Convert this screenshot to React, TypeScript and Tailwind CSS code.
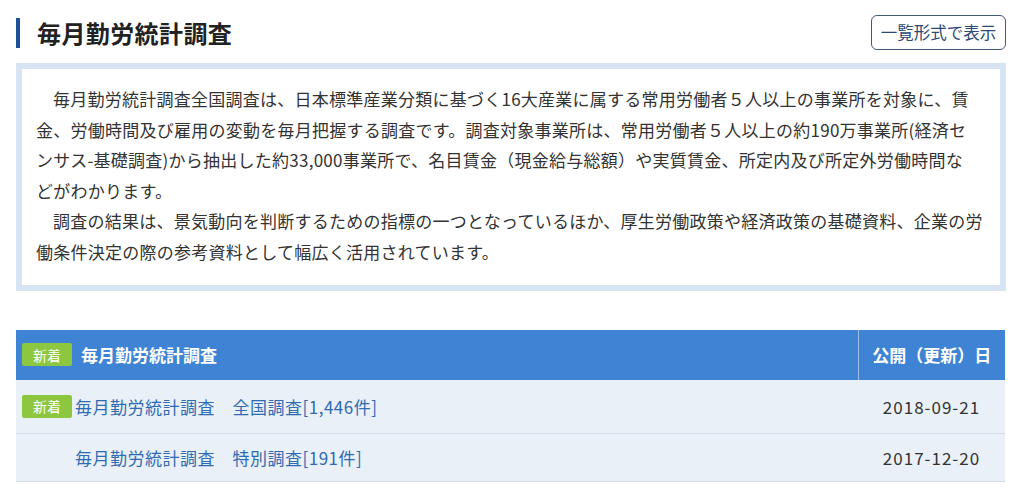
import React from 'react'

const font = { fontFamily: '"Noto Sans CJK JP", "Noto Sans", sans-serif' }

function Badge() {
  return (
    <span className="inline-flex items-center justify-center w-[50px] h-[23px] rounded-[2px] bg-[#8dc63f] text-white text-[14px] font-normal leading-none">
      新着
    </span>
  )
}

export default function App() {
  const rows = [
    { isNew: true, label: '毎月勤労統計調査　全国調査[1,446件]', date: '2018-09-21', h: 'h-[54px]' },
    { isNew: false, label: '毎月勤労統計調査　特別調査[191件]', date: '2017-12-20', h: 'h-[48px]' },
  ]

  return (
    <div className="w-[1024px] h-[494px] bg-white overflow-hidden text-[#333]" style={font}>
      <div className="ml-4 w-[990px] pt-[15px]">
        <div className="flex items-center justify-between h-[35px]">
          <h1 className="border-l-[4px] border-[#1d4f9c] pl-[17px] h-[30px] flex items-center text-[24px] font-bold text-[#222] leading-none tracking-[0.4px]">
            毎月勤労統計調査
          </h1>
          <button className="h-[35px] w-[135px] rounded-[6px] border border-[#41597d] text-[#2b4a77] text-[16.5px] leading-none bg-white">
            一覧形式で表示
          </button>
        </div>

        <div className="mt-[13px] border-[6px] border-[#d7e4f4] bg-white pl-[14px] pr-2 pt-[15px] pb-[17px] text-[17px] leading-[30.6px] tracking-[0.25px] text-[#333]">
          <p className="whitespace-nowrap indent-[1em]">
            毎月勤労統計調査全国調査は、日本標準産業分類に基づく16大産業に属する常用労働者５人以上の事業所を対象に、賃
            <br />
            金、労働時間及び雇用の変動を毎月把握する調査です。調査対象事業所は、常用労働者５人以上の約190万事業所(経済セ
            <br />
            ンサス-基礎調査)から抽出した約33,000事業所で、名目賃金（現金給与総額）や実質賃金、所定内及び所定外労働時間な
            <br />
            どがわかります。
          </p>
          <p className="whitespace-nowrap indent-[1em]">
            調査の結果は、景気動向を判断するための指標の一つとなっているほか、厚生労働政策や経済政策の基礎資料、企業の労
            <br />
            働条件決定の際の参考資料として幅広く活用されています。
          </p>
        </div>

        <table className="mt-[39px] w-[989px] border-collapse">
          <thead>
            <tr className="h-[50px] bg-[#3f84d4] text-white">
              <th className="text-left pl-[6px] font-bold text-[17px]">
                <div className="flex items-center gap-[9px]">
                  <Badge />
                  <span>毎月勤労統計調査</span>
                </div>
              </th>
              <th className="w-[147px] border-l border-[#9dc0ea] text-center font-bold text-[17px]">
                公開（更新）日
              </th>
            </tr>
          </thead>
          <tbody>
            {rows.map((r) => (
              <tr key={r.date} className={`${r.h} bg-[#eaf0f8] border-b border-[#d3dde9]`}>
                <td className="pl-[6px]">
                  <div className="flex items-center gap-[3px]">
                    {r.isNew ? <Badge /> : <span className="w-[50px]" />}
                    <span className="text-[#2f6bb3] text-[17px] tracking-[0.5px]">{r.label}</span>
                  </div>
                </td>
                <td className="text-center text-[17px] text-[#333] tracking-[1px]">{r.date}</td>
              </tr>
            ))}
          </tbody>
        </table>
      </div>
    </div>
  )
}
